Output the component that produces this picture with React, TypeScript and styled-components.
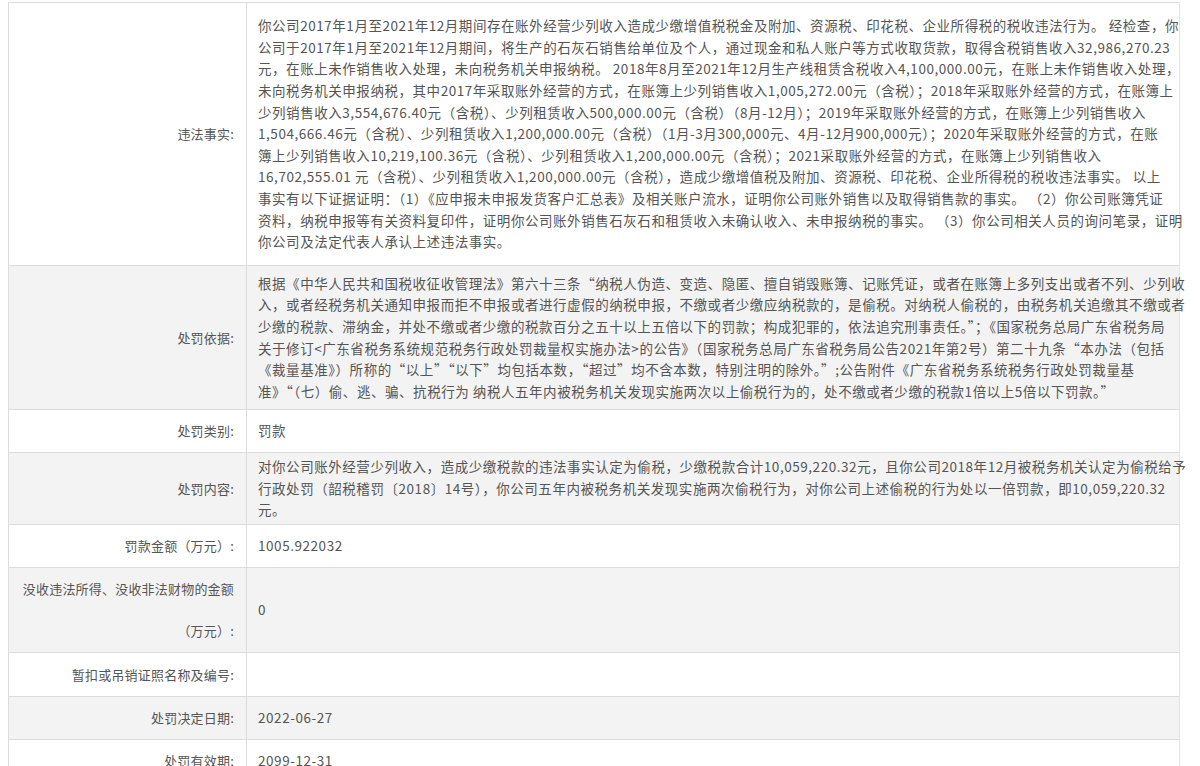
import React from "react";
import styled, { createGlobalStyle } from "styled-components";

const G = createGlobalStyle`
  body { margin: 0; background: #fff; font-family: "Microsoft YaHei", "Noto Sans CJK SC", sans-serif; }
`;

const Table = styled.div`
  margin: 2px 20px 0 8px;
  border-top: 1px solid #dcdcdc;
  border-left: 1px solid #dcdcdc;
  border-right: 1px solid #e4e4e4;
  font-size: 13.5px;
  color: #555;
`;

const Row = styled.div<{ $alt?: boolean; $h?: number }>`
  display: grid;
  grid-template-columns: 238px 1fr;
  background: ${(p) => (p.$alt ? "#f3f3f3" : "#fff")};
  border-bottom: 1px solid #dcdcdc;
  min-height: ${(p) => p.$h ?? 42}px;
`;

const Label = styled.div`
  border-right: 1px solid #dcdcdc;
  display: flex;
  align-items: center;
  justify-content: flex-end;
  padding: 0 12px 0 4px;
  text-align: right;
  line-height: 42px;
  color: #555;
  font-size: 13px;
  letter-spacing: 0.2px;
`;

const Value = styled.div`
  padding: 2px 0 2px 11px;
  display: flex;
  flex-direction: column;
  justify-content: center;
  line-height: 21.6px;
  letter-spacing: 0.55px;
`;

const Line = styled.span`
  display: block;
  white-space: nowrap;
`;

const rows: { label: React.ReactNode; lines: string[]; alt?: boolean; h?: number }[] = [
  {
    label: "违法事实:",
    lines: [
      "你公司2017年1月至2021年12月期间存在账外经营少列收入造成少缴增值税税金及附加、资源税、印花税、企业所得税的税收违法行为。 经检查，你",
      "公司于2017年1月至2021年12月期间，将生产的石灰石销售给单位及个人，通过现金和私人账户等方式收取货款，取得含税销售收入32,986,270.23",
      "元，在账上未作销售收入处理，未向税务机关申报纳税。 2018年8月至2021年12月生产线租赁含税收入4,100,000.00元，在账上未作销售收入处理，",
      "未向税务机关申报纳税，其中2017年采取账外经营的方式，在账簿上少列销售收入1,005,272.00元（含税）；2018年采取账外经营的方式，在账簿上",
      "少列销售收入3,554,676.40元（含税）、少列租赁收入500,000.00元（含税）（8月-12月）；2019年采取账外经营的方式，在账簿上少列销售收入",
      "1,504,666.46元（含税）、少列租赁收入1,200,000.00元（含税）（1月-3月300,000元、4月-12月900,000元）；2020年采取账外经营的方式，在账",
      "簿上少列销售收入10,219,100.36元（含税）、少列租赁收入1,200,000.00元（含税）；2021采取账外经营的方式，在账簿上少列销售收入",
      "16,702,555.01 元（含税）、少列租赁收入1,200,000.00元（含税），造成少缴增值税及附加、资源税、印花税、企业所得税的税收违法事实。 以上",
      "事实有以下证据证明：（1）《应申报未申报发货客户汇总表》及相关账户流水，证明你公司账外销售以及取得销售款的事实。 （2）你公司账簿凭证",
      "资料，纳税申报等有关资料复印件，证明你公司账外销售石灰石和租赁收入未确认收入、未申报纳税的事实。 （3）你公司相关人员的询问笔录，证明",
      "你公司及法定代表人承认上述违法事实。",
    ],
    h: 262,
  },
  {
    label: "处罚依据:",
    alt: true,
    lines: [
      "根据《中华人民共和国税收征收管理法》第六十三条“纳税人伪造、变造、隐匿、擅自销毁账簿、记账凭证，或者在账簿上多列支出或者不列、少列收",
      "入，或者经税务机关通知申报而拒不申报或者进行虚假的纳税申报，不缴或者少缴应纳税款的，是偷税。对纳税人偷税的，由税务机关追缴其不缴或者",
      "少缴的税款、滞纳金，并处不缴或者少缴的税款百分之五十以上五倍以下的罚款；构成犯罪的，依法追究刑事责任。”；《国家税务总局广东省税务局",
      "关于修订<广东省税务系统规范税务行政处罚裁量权实施办法>的公告》（国家税务总局广东省税务局公告2021年第2号）第二十九条“本办法（包括",
      "《裁量基准》）所称的“以上”“以下”均包括本数，“超过”均不含本数，特别注明的除外。”;公告附件《广东省税务系统税务行政处罚裁量基",
      "准》“（七）偷、逃、骗、抗税行为 纳税人五年内被税务机关发现实施两次以上偷税行为的，处不缴或者少缴的税款1倍以上5倍以下罚款。”",
    ],
    h: 143,
  },
  { label: "处罚类别:", lines: ["罚款"], h: 42 },
  {
    label: "处罚内容:",
    alt: true,
    lines: [
      "对你公司账外经营少列收入，造成少缴税款的违法事实认定为偷税，少缴税款合计10,059,220.32元，且你公司2018年12月被税务机关认定为偷税给予",
      "行政处罚（韶税稽罚〔2018〕14号），你公司五年内被税务机关发现实施两次偷税行为，对你公司上述偷税的行为处以一倍罚款，即10,059,220.32",
      "元。",
    ],
    h: 71,
  },
  { label: "罚款金额（万元）:", lines: ["1005.922032"], h: 42 },
  {
    label: (
      <span style={{ lineHeight: "42px" }}>
        没收违法所得、没收非法财物的金额
        <br />
        （万元）:
      </span>
    ),
    alt: true,
    lines: ["0"],
    h: 83,
  },
  { label: "暂扣或吊销证照名称及编号:", lines: [""], h: 43 },
  { label: "处罚决定日期:", alt: true, lines: ["2022-06-27"], h: 42 },
  { label: "处罚有效期:", lines: ["2099-12-31"], h: 42 },
];

export default function App() {
  return (
    <>
      <G />
      <Table>
        {rows.map((r, i) => (
          <Row key={i} $alt={r.alt} $h={r.h}>
            <Label>{r.label}</Label>
            <Value>
              {r.lines.map((l, j) => (
                <Line key={j}>{l}</Line>
              ))}
            </Value>
          </Row>
        ))}
      </Table>
    </>
  );
}
